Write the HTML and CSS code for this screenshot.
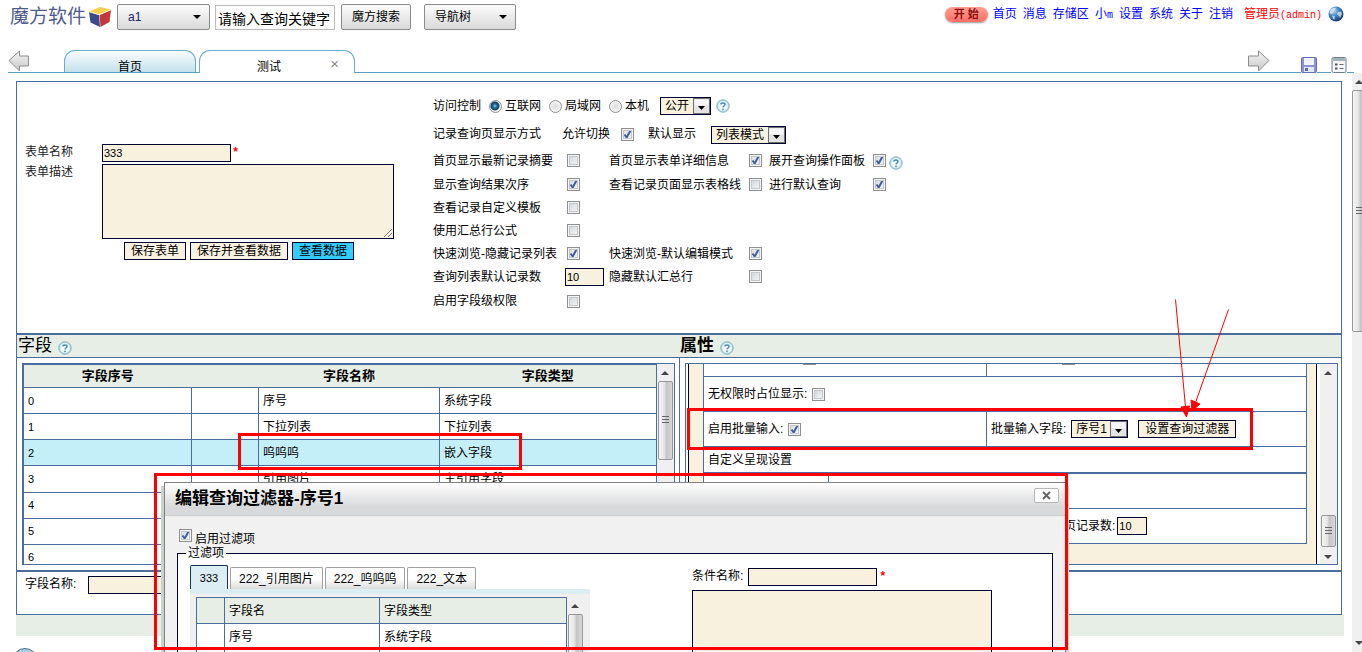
FILE: index.html
```html
<!DOCTYPE html>
<html lang="zh-CN">
<head>
<meta charset="utf-8">
<title>魔方软件</title>
<link rel="stylesheet" href="styles.css">
</head>
<body>
<svg class="defs" width="0" height="0" aria-hidden="true">
  <defs>
    <linearGradient id="gArrow" x1="0" y1="0" x2="0" y2="1"><stop offset="0" stop-color="#f4f4f4"/><stop offset="1" stop-color="#c8c8c8"/></linearGradient>
    <radialGradient id="gHelp" cx="0.5" cy="0.5" r="0.5"><stop offset="0.5" stop-color="#f6fcfd"/><stop offset="1" stop-color="#b4dce4"/></radialGradient>
    <radialGradient id="gGlobe" cx="0.35" cy="0.3" r="0.75"><stop offset="0" stop-color="#b9d6ee"/><stop offset="0.5" stop-color="#3f7fc0"/><stop offset="1" stop-color="#123564"/></radialGradient>
    <symbol id="help" viewBox="0 0 14 14">
      <circle cx="7" cy="7" r="6.2" fill="url(#gHelp)" stroke="#7fb0bd"/>
      <path d="M4.900 5.600C4.900 3.400 9 3.400 9 5.600C9 7 7 7 7 8.600" fill="none" stroke="#4a8cb8" stroke-width="1.5"/>
      <rect x="6.200" y="9.600" width="1.600" height="1.500" fill="#4a8cb8"/>
    </symbol>
  </defs>
</svg>

<header class="topbar">
  <div class="brand">
    <span class="brand-name">魔方软件</span>
    <svg class="cube" viewBox="0 0 24 24" aria-hidden="true">
      <path d="M1 6.500L12 2L23 4.500L11 9.500Z" fill="#f9cf52"/>
      <path d="M1 7L11 10L12 22L2.500 17.500Z" fill="#3b4a8a"/>
      <path d="M11.500 10L23 5L21.500 17L12.500 22Z" fill="#c4373b"/>
      <path d="M1 6.700L11.200 9.700L23 4.700" fill="none" stroke="#fff3d0" stroke-width="0.800"/>
    </svg>
  </div>
  <select class="ui-select app-select" aria-label="应用"><option>a1</option></select>
  <input class="keyword" type="text" value="请输入查询关键字" aria-label="关键字">
  <button class="ui-button search-button" type="button">魔方搜索</button>
  <select class="ui-select nav-select" aria-label="导航树"><option>导航树</option></select>
  <nav class="links">
    <button class="start" type="button">开 始</button>
    <a href="#">首页</a><a href="#">消息</a><a href="#">存储区</a><a href="#">小<span class="mono">m</span></a><a href="#">设置</a><a href="#">系统</a><a href="#">关于</a><a href="#">注销</a>
    <a class="admin" href="#">管理员<span class="mono">(admin)</span></a>
    <svg class="globe" viewBox="0 0 16 16" aria-hidden="true"><circle cx="8" cy="8" r="7.500" fill="url(#gGlobe)"/><path d="M2 4.500C3.500 2.500 6 1.300 8 2L7 4L5.500 5.500L4.500 7.500L3 8L1.500 7ZM10 6L13 5.500L14 8L12 12L10.500 9.500L9 8ZM4 9.500L7 10.500L6.500 13.500L5 13Z" fill="#dcebf5" opacity="0.750"/></svg>
  </nav>
</header>

<div class="tabbar">
  <svg class="step" viewBox="0 0 22 22" aria-hidden="true"><path d="M1 10.500L11.500 1V6H20.500V16H11.500V21Z" fill="url(#gArrow)" stroke="#8c8c8c"/></svg>
  <button class="tab" type="button">首页</button>
  <button class="tab tab-active" type="button">测试<span class="tab-close">×</span></button>
  <span class="spacer"></span>
  <svg class="step step-next" viewBox="0 0 22 22" aria-hidden="true"><path d="M21 10.500L10.500 1V6H0.500V16H10.500V21Z" fill="url(#gArrow)" stroke="#8c8c8c"/></svg>
  <svg class="tool" viewBox="0 0 16 16" aria-hidden="true"><rect x="0.500" y="0.500" width="15" height="15" rx="1" fill="#8d94d6" stroke="#666eb8"/><rect x="3" y="1" width="10" height="7" fill="#f2f4fc"/><rect x="3" y="10" width="10" height="5" fill="#e4e7f6"/><rect x="4" y="11" width="3" height="3" fill="#5e66b4"/></svg>
  <svg class="tool" viewBox="0 0 16 16" aria-hidden="true"><rect x="1" y="0.500" width="14" height="15" rx="1.500" fill="#f4f6f7" stroke="#6f7f8a"/><rect x="1.500" y="1" width="13" height="3" fill="#a3b2bb"/><path d="M4 7.500H6.500M4 11.500H6.500" stroke="#555" stroke-width="2"/><path d="M8.500 7.500H12.500M8.500 11.500H12.500" stroke="#666"/></svg>
</div>

<div class="workspace">
  <main class="page">
    <div class="frame">
      <section class="settings">
        <form class="basic">
          <label for="fname">表单名称</label>
          <div class="basic-field"><input id="fname" class="field" type="text" value="333"><span class="star">*</span></div>
          <label for="fdesc">表单描述</label>
          <textarea id="fdesc" class="field"></textarea>
          <div class="basic-actions">
            <button class="btn" type="button">保存表单</button><button class="btn" type="button">保存并查看数据</button><button class="btn btn-blue" type="button">查看数据</button>
          </div>
        </form>
        <form class="options">
          <div class="line">
            <span class="access">访问控制</span>
            <label><input type="radio" name="acc" checked>互联网</label>
            <label><input type="radio" name="acc">局域网</label>
            <label><input type="radio" name="acc">本机</label>
            <select class="field select open-select" aria-label="公开"><option>公开</option></select>
            <svg class="help"><use href="#help"/></svg>
          </div>
          <div class="line">
            <span class="mode">记录查询页显示方式</span>
            <label class="switch">允许切换<input type="checkbox" checked></label>
            <label for="dmode">默认显示</label>
            <select id="dmode" class="field select mode-select"><option>列表模式</option></select>
          </div>
          <div class="grid">
            <label for="c1">首页显示最新记录摘要</label><input id="c1" type="checkbox">
            <label for="c2">首页显示表单详细信息</label><input id="c2" type="checkbox" checked>
            <label for="c3">展开查询操作面板</label><span class="pair"><input id="c3" type="checkbox" checked><svg class="help"><use href="#help"/></svg></span>
            <label for="c4">显示查询结果次序</label><input id="c4" type="checkbox" checked>
            <label for="c5">查看记录页面显示表格线</label><input id="c5" type="checkbox">
            <label for="c6">进行默认查询</label><input id="c6" type="checkbox" checked>
            <label class="first" for="c7">查看记录自定义模板</label><input id="c7" type="checkbox">
            <label class="first" for="c8">使用汇总行公式</label><input id="c8" type="checkbox">
            <label class="first" for="c9">快速浏览-隐藏记录列表</label><input id="c9" type="checkbox" checked>
            <label for="c10">快速浏览-默认编辑模式</label><input id="c10" type="checkbox" checked>
            <label class="first" for="c11">查询列表默认记录数</label><input id="c11" class="field count" type="text" value="10">
            <label for="c12">隐藏默认汇总行</label><input id="c12" type="checkbox">
            <label class="first" for="c13">启用字段级权限</label><input id="c13" type="checkbox">
          </div>
        </form>
      </section>

      <div class="columns">
        <section class="column">
          <h2>字段 <svg class="help"><use href="#help"/></svg></h2>
          <div class="panel">
            <table class="fields">
              <colgroup><col class="c-no"><col class="c-gap"><col class="c-name"><col class="c-type"></colgroup>
              <thead><tr><th>字段序号</th><th></th><th>字段名称</th><th>字段类型</th></tr></thead>
              <tbody>
                <tr><td class="num">0</td><td></td><td>序号</td><td>系统字段</td></tr>
                <tr><td class="num">1</td><td></td><td>下拉列表</td><td>下拉列表</td></tr>
                <tr class="selected"><td class="num">2</td><td></td><td>呜呜呜</td><td>嵌入字段</td></tr>
                <tr><td class="num">3</td><td></td><td>引用图片</td><td>主引用字段</td></tr>
                <tr><td class="num">4</td><td></td><td></td><td></td></tr>
                <tr><td class="num">5</td><td></td><td></td><td></td></tr>
                <tr><td class="num">6</td><td></td><td></td><td></td></tr>
              </tbody>
            </table>
            <div class="bar"><i class="up"></i><b class="thumb thumb-list"></b></div>
          </div>
        </section>
        <section class="column">
          <h2 class="strong">属性 <svg class="help"><use href="#help"/></svg></h2>
          <div class="panel">
            <div class="props">
              <div class="prop prop-cut"><div class="cell half cut-a"><input type="checkbox" aria-label="选项一"></div><div class="cell cut-b"><input type="checkbox" aria-label="选项二"></div></div>
              <div class="prop"><div class="cell"><label for="p1">无权限时占位显示:</label><input id="p1" type="checkbox"></div></div>
              <div class="prop"><div class="cell half"><label for="p2">启用批量输入:</label><input id="p2" type="checkbox" checked></div><div class="cell"><label for="p3">批量输入字段:</label><select id="p3" class="field select batch-select"><option>序号1</option></select><button class="btn filter-button" type="button">设置查询过滤器</button></div></div>
              <div class="prop prop-title"><div class="cell">自定义呈现设置</div></div>
              <div class="prop"><div class="cell narrow"></div><div class="cell"></div></div>
              <div class="prop"><div class="cell per-page"><label for="p4">每页记录数:</label><input id="p4" class="field" type="text" value="10"></div></div>
            </div>
            <div class="bar bar-end"><i class="up"></i><b class="thumb thumb-props"></b><i class="down"></i></div>
          </div>
        </section>
      </div>

      <div class="lookup"><label for="look">字段名称:</label><input id="look" class="field" type="text"></div>
    </div>
    <div class="band"></div>
    <div class="knob"></div>
  </main>
  <div class="bar page-bar"><i class="up"></i><b class="thumb thumb-page"></b><i class="down"></i></div>
</div>

<div class="dialog" role="dialog" aria-labelledby="dtitle">
  <div class="dialog-head"><h1 id="dtitle">编辑查询过滤器-序号1</h1><button class="close" type="button" aria-label="关闭"><svg viewBox="0 0 9 9"><path d="M1 1L8 8M8 1L1 8" stroke="#666" stroke-width="2"/></svg></button></div>
  <div class="dialog-body">
    <label class="enable"><input type="checkbox" checked><span>启用过滤项</span></label>
    <fieldset>
      <legend>过滤项</legend>
      <div class="sources">
        <div class="subtabs"><button class="subtab on" type="button">333</button><button class="subtab" type="button">222_引用图片</button><button class="subtab" type="button">222_呜呜呜</button><button class="subtab" type="button">222_文本</button></div>
        <div class="subpanel">
          <table class="picker">
            <colgroup><col class="k-mark"><col class="k-name"><col></colgroup>
            <tr class="heading"><td></td><td>字段名</td><td>字段类型</td></tr>
            <tr><td></td><td>序号</td><td>系统字段</td></tr>
            <tr><td></td><td></td><td></td></tr>
          </table>
          <div class="bar"><i class="up"></i><b class="thumb thumb-picker"></b></div>
        </div>
      </div>
      <div class="condition">
        <div class="condition-name"><label for="cname">条件名称:</label><input id="cname" class="field" type="text"><span class="star">*</span></div>
        <textarea class="field" aria-label="条件"></textarea>
      </div>
    </fieldset>
  </div>
</div>

<div class="mark mark-row"></div>
<div class="mark mark-batch"></div>
<div class="mark mark-dialog"></div>
<svg class="pointers" viewBox="0 0 60 125" aria-hidden="true">
  <path d="M3.500 2.500L13.500 110M56.500 12.500L23 107" stroke="#f00" fill="none"/>
  <path d="M9 110L17.500 109L14.500 120ZM19 103L28 107L20 114Z" fill="#f00" stroke="#f00"/>
</svg>
</body>
</html>
```

FILE: styles.css
```css
* { box-sizing: border-box; }

body {
  position: relative;
  margin: 0;
  height: 100vh;
  overflow: hidden;
  display: flex;
  flex-direction: column;
  background: #fff;
  color: #000;
  font: 12px/18px "Liberation Sans", "Noto Sans CJK SC", sans-serif;
}

input, button, select, textarea { margin: 0; font: inherit; color: inherit; border-radius: 0; }
.defs { position: absolute; }
.mono { font: 10px "Liberation Mono", monospace; }
.star { color: #f00; font: bold 12px/18px "Liberation Mono", monospace; padding-left: 1px; }
.spacer { flex: 1; }
.help { width: 14px; height: 14px; flex: none; }

/* top bar */
.topbar { display: flex; height: 50px; padding: 4px 18px 0 10px; align-items: flex-start; flex: none; }
.brand { display: flex; width: 107px; gap: 2px; }
.brand-name { font-size: 19px; line-height: 26px; color: #4d5b8c; white-space: nowrap; }
.cube { width: 24px; height: 24px; margin-top: 1px; flex: none; }
.ui-select, .ui-button {
  height: 26px;
  border: 1px solid #8a8a8a;
  border-radius: 2px;
  background: linear-gradient(#fdfdfd, #ececec 45%, #dadada);
}
.ui-select {
  appearance: none;
  padding: 0 10px;
  background: url("data:image/svg+xml,%3Csvg xmlns='http://www.w3.org/2000/svg' width='8' height='4'%3E%3Cpath d='M0 0H8L4 4Z'/%3E%3C/svg%3E") no-repeat right 8px center, linear-gradient(#fdfdfd, #ececec 45%, #dadada);
}
.app-select { width: 93px; margin-right: 5px; color: #222266; }
.keyword { width: 120px; height: 25px; margin-top: 1px; padding: 0 2px; border: 1px solid #bbb; font-size: 14px; }
.search-button { width: 70px; margin: 0 13px 0 6px; padding: 0; }
.nav-select { width: 92px; }
.links { display: flex; margin-left: auto; gap: 6px; align-items: center; height: 20px; white-space: nowrap; }
.links a { color: #00f; text-decoration: none; }
.links a.admin { color: #f00; margin-left: 5px; }
.start {
  width: 43px; height: 15px; padding: 0; border: 0; border-radius: 8px;
  background: linear-gradient(#ff9d92, #fb6f66); box-shadow: 0 1px 2px #999;
  color: #8c1010; font-size: 11px; line-height: 14px; font-weight: bold; margin-right: -1px;
}
.globe { width: 16px; height: 16px; }

/* tabs */
.tabbar { display: flex; height: 23px; margin: 0 8px; border-bottom: 1px solid #5a9ec0; flex: none; }
.step { width: 22px; height: 22px; margin-right: 34px; flex: none; }
.step-next { margin-right: 31px; }
.tab {
  width: 132px; height: 22px; padding: 7px 0 0;
  border: 1px solid #6aaccb; border-bottom: 0; border-radius: 11px 11px 0 0;
  background: linear-gradient(#fafdfe, #c4e0ec); line-height: 18px;
}
.tab-active { position: relative; width: 156px; height: 23px; margin: 0 0 -1px 3px; padding-right: 16px; background: #fff; }
.tab-close { position: absolute; right: 15px; top: 4px; font-size: 15px; color: #888; }
.tool { width: 16px; height: 16px; margin: 7px 14px 0 0; flex: none; background: #fff; }
.tool:last-child { margin-right: 7px; }

/* page */
.workspace { display: flex; flex: 1; min-height: 0; overflow: hidden; }
.page { flex: 1; min-width: 0; padding: 8px 8px 0 16px; overflow: hidden; }
.frame { margin-right: 2px; border: 1px solid #4a6c9f; }
.settings { display: flex; height: 251px; padding: 10px 8px 0; }

input[type="checkbox"], input[type="radio"] { appearance: none; width: 13px; height: 13px; flex: none; }
input[type="checkbox"] {
  border: 1px solid #8e8f8f;
  background: linear-gradient(135deg, #cfd3d8, #f8f8f8) padding-box;
  box-shadow: inset 0 0 0 1px #f4f4f4, inset 0 0 0 2px #c4c8cc;
}
input[type="checkbox"]:checked {
  background: url("data:image/svg+xml,%3Csvg xmlns='http://www.w3.org/2000/svg' width='11' height='11'%3E%3Cpath d='M2.500 5.500L4.700 8.500L8.500 1.500' fill='none' stroke='%233f5d9e' stroke-width='2'/%3E%3C/svg%3E") no-repeat, linear-gradient(135deg, #d5d9de, #f8f8f8);
}
input[type="radio"] { border: 1px solid #8e8f8f; border-radius: 50%; background: radial-gradient(#dcdcdc, #fff); }
input[type="radio"]:checked { background: radial-gradient(circle at 45% 45%, #7fd0f0 0, #1c6d9c 2px, #173f5e 4px, #f2f2f2 5px); }

.field { border: 1px solid #000033; background: #f8f1de; padding: 0 1px; font-size: 11px; line-height: 16px; height: 18px; }
.select {
  appearance: none; font-size: 12px; padding: 0 4px;
  background: url("data:image/svg+xml,%3Csvg xmlns='http://www.w3.org/2000/svg' width='17' height='16'%3E%3Crect x='.5' y='.5' width='16' height='15' fill='%23e4e4e4' stroke='%23707070'/%3E%3Crect x='1.500' y='1.500' width='14' height='6' fill='%23f6f6f6'/%3E%3Cpath d='M5 8H12L8.500 12Z'/%3E%3C/svg%3E") no-repeat right center #f8f1de;
}
textarea.field { display: block; resize: none; }
.btn { height: 18px; padding: 0 6px; border: 1px solid #000033; background: #faf2e0; line-height: 16px; white-space: nowrap; }
.btn-blue { background: #33ccff; }

.basic { display: grid; grid-template-columns: 77px 292px; grid-template-rows: 20px 76px 20px; align-content: start; width: 408px; padding-top: 52px; flex: none; }
.basic label { color: #222; line-height: 16px; }
.basic-field { display: flex; }
.basic-field .field { width: 129px; }
#fdesc {
  height: 75px; width: 292px;
  background: linear-gradient(135deg, transparent 50%, #777 50% 56%, transparent 56% 70%, #777 70% 76%, transparent 76%) no-repeat right 1px bottom 1px / 8px 8px #f8f1de;
}
.basic-actions { grid-column: 2; display: flex; justify-content: center; gap: 4px; padding: 2px 38px 0 20px; height: 20px; }

.options { white-space: nowrap; }
.line { display: flex; align-items: center; height: 28px; }
.line label { display: flex; align-items: center; gap: 3px; }
.access { width: 56px; }
.line label:has(input[type="radio"]) { margin-right: 8px; }
.open-select { width: 51px; margin: 0 5px 0 3px; }
.mode { width: 129px; }
.switch.switch { gap: 11px; margin-right: 14px; }
.mode-select { width: 75px; margin: 2px 0 0 15px; }
.grid {
  display: grid; align-items: center;
  grid-template-columns: 134px 42px 140px 20px 104px auto;
  grid-template-rows: 25px 23px 23px 23px 23px 23px 26px;
}
.grid .first { grid-column: 1; }
.grid .count { width: 39px; margin-left: -2px; }
.pair { display: flex; align-items: center; gap: 3px; }
.pair .help { margin-top: 5px; }

.columns { display: flex; border-top: 2px solid #4a6c9f; border-bottom: 2px solid #4a6c9f; }
.column { flex: 1; min-width: 0; }
.column h2 { display: flex; gap: 6px; margin: 0; height: 23px; padding-left: 1px; background: #e7eee5; border-bottom: 1px solid #4a6c9f; font-size: 17px; line-height: 22px; font-weight: 400; }
.column h2.strong { font-weight: bold; }
.column h2 .help { margin-top: 6px; }
.column .panel { display: flex; height: 202px; margin: 5px 4px 5px 5px; border: 1px solid #4a6c9f; overflow: hidden; }
.column + .column { position: relative; }
.column + .column .panel { margin: 5px 3px 5px 6px; }
.column + .column::before { content: ""; position: absolute; top: 23px; bottom: 0; left: 0; width: 1px; background: #4a6c9f; }

table { border-collapse: collapse; table-layout: fixed; }
.fields { flex: 1; width: 100%; height: 207px; border: 1px solid #4a6c9f; }
.fields th { height: 23px; padding: 0; background: #e7eee5; font-weight: bold; line-height: 22px; font-size: 13px; }
.fields td { height: 26px; padding: 0 4px; border: 1px solid #4a6c9f; line-height: 18px; }
.fields .num { font-size: 11px; }
.fields .selected { background: #c5eff8; }
.c-no { width: 168px; }
.c-gap { width: 67px; }
.c-name { width: 181px; }

.props { flex: 1; margin: 0 3px 0 2px; padding: 0 9px 0 14px; border: solid #000033; border-width: 0 1px; background: #f8f1de; }
.prop { display: flex; height: 35px; border: solid #4a6c9f; border-width: 0 1px 1px; background: #fff; }
.cell { display: flex; align-items: center; padding: 0 4px; flex: 1; gap: 5px; white-space: nowrap; }
.prop .half { flex: none; width: 47%; border-right: 1px solid #4a6c9f; }
.prop .narrow { flex: none; width: 125px; border-right: 1px solid #4a6c9f; }
.prop-cut { height: 13px; }
.prop-cut .cell { align-items: flex-start; overflow: hidden; }
.prop-cut input { margin-top: -12px; }
.cut-a { padding-left: 99px; }
.cut-b { padding-left: 75px; }
.prop-title { height: 27px; border-bottom-width: 2px; }
.batch-select { width: 57px; }
.filter-button { width: 98px; margin-left: 5px; padding: 0; }
.per-page { padding-left: 348px; gap: 2px; }
.per-page .field { width: 30px; }

.lookup { display: flex; gap: 12px; height: 42px; padding: 4px 8px; line-height: 16px; }
.lookup .field { width: 129px; }
.band { height: 21px; background: #e7eee5; }
.knob { width: 26px; height: 26px; margin: 12px 0 0 -4px; border: 1px solid #3f6f92; border-radius: 50%; background: linear-gradient(#a8c8dc, #e4f0f6); }

/* scroll bars */
.bar { display: flex; flex-direction: column; align-items: center; width: 17px; flex: none; padding-right: 1px; background: #f0f0f0; }
.up, .down { width: 0; height: 0; border: 4px solid transparent; flex: none; }
.up { border-bottom-color: #444; border-top-width: 0; margin: 7px 0 6px; }
.down { border-top-color: #444; border-bottom-width: 0; margin-top: auto; margin-bottom: 7px; }
.thumb {
  width: 15px; border: 1px solid #979797; border-radius: 2px; flex: none;
  background: repeating-linear-gradient(#666 0 1px, transparent 1px 3px) center / 7px 9px no-repeat,
    linear-gradient(90deg, #f6f6f6, #e2e2e2 45%, #c4c4c8 55%, #d8d8d8);
}
.thumb-list { height: 79px; }
.thumb-props { height: 32px; margin-top: 134px; }
.bar-end .down { margin-top: 8px; }
.thumb-page { height: 242px; }
.thumb-picker { height: 120px; }
.page-bar { width: 10px; padding: 0; align-items: flex-start; overflow: hidden; }
.page-bar .up, .page-bar .down { margin-left: 3px; }

/* dialog */
.dialog { position: absolute; left: 164px; top: 482px; bottom: 0; width: 902px; border: 1px solid #808080; border-bottom: 0; background: #f1f1f1; box-shadow: 4px 3px 0 -1px #ccd2cb, -4px 3px 0 -1px #ccd2cb; }
.dialog-head { display: flex; justify-content: space-between; height: 33px; padding: 4px 6px 0 10px; border-bottom: 1px solid #c8cacc; background: linear-gradient(#fff, #d8d9db 75%); }
.dialog h1 { margin: 0; font-size: 17px; line-height: 24px; }
.close { display: flex; align-items: center; justify-content: center; width: 25px; height: 15px; margin-top: 1px; padding: 0; border: 1px solid #b8b8b8; border-radius: 2px; background: #fff; }
.close svg { width: 9px; height: 9px; }
.dialog-body { height: calc(100% - 33px); padding: 13px 12px 0 12px; overflow: hidden; }
.enable { display: flex; gap: 3px; height: 17px; padding-left: 2px; }
.enable span { padding-top: 1px; }
fieldset { display: flex; margin: 0; padding: 5px 12px 0; min-width: 0; height: 130px; border: 1px solid #000033; background: #fff; }
legend { padding: 0 2px; margin-left: -4px; line-height: 14px; height: 14px; background: linear-gradient(#f1f1f1 50%, #fff 50%); }
.sources { width: 400px; margin-right: 102px; flex: none; }
.subtabs { display: flex; gap: 2px; align-items: flex-end; height: 24px; }
.subtab { height: 22px; padding: 0 8px; border: 1px solid #a0a0a0; border-bottom: 0; border-radius: 2px 2px 0 0; background: linear-gradient(#fff 50%, #dcdcdc); white-space: nowrap; line-height: 20px; }
.subtab.on { width: 38px; height: 24px; padding: 0; border-color: #1c3358; background: #dcedf4; font-size: 11px; }
.subpanel { display: flex; height: 100px; padding: 3px 6px 0; border-top: 5px solid #dcedf4; background: #f0f0f0; overflow: hidden; }
.picker { width: 371px; height: 79px; background: #fff; }
.picker td { height: 26px; padding: 0 4px; border: 1px solid #4a6c9f; }
.picker .heading { background: #e7eee5; }
.k-mark { width: 28px; }
.k-name { width: 155px; }
.condition { flex: 1; padding-top: 3px; }
.condition-name { display: flex; gap: 5px; height: 22px; line-height: 16px; }
.condition-name .field { width: 129px; }
.condition-name .star { margin-left: -4px; }
.condition textarea { width: 300px; height: 100px; }

/* annotations */
.mark { position: absolute; border: 3px solid #f00; pointer-events: none; }
.mark-row { left: 238px; top: 433px; width: 284px; height: 37px; }
.mark-batch { left: 687px; top: 408px; width: 566px; height: 42px; }
.mark-dialog { left: 154px; top: 473px; width: 914px; height: 177px; }
.pointers { position: absolute; left: 1172px; top: 297px; width: 60px; height: 125px; pointer-events: none; }
```
